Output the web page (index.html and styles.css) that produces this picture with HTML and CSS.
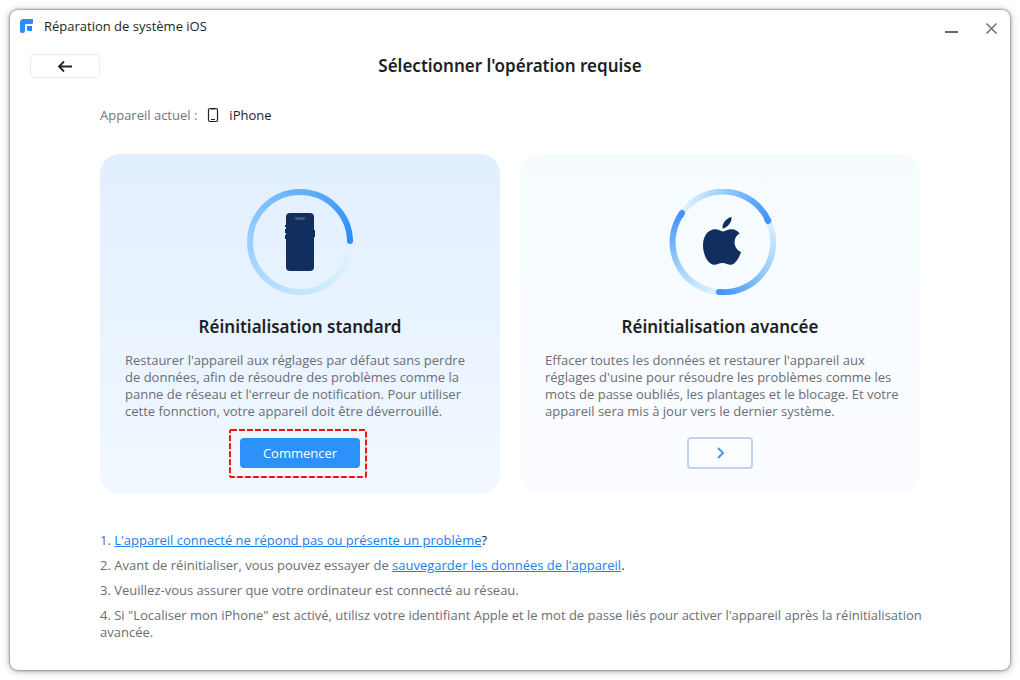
FILE: index.html
```
<!DOCTYPE html>
<html lang="fr">
<head>
    <meta charset="UTF-8">
    <meta name="viewport" content="width=device-width, initial-scale=1.0">
    <title>Réparation de système iOS</title>
    <link rel="stylesheet" href="styles.css">
</head>
<body>
    <div class="window">
        <header class="titlebar">
            <svg class="logo" width="14" height="14" viewBox="0 0 14 14">
                <path d="M3.5 0H13v3.5c0 1-.5 1.500-1.500 1.500H6.500C5.500 5 5 5.500 5 6.500V12c0 1.300-.8 2-2 2H2C.7 14 0 13.200 0 12V3.500C0 1.300 1.300 0 3.500 0z" fill="#2d8cf8"/>
                <path d="M7 7h5v3.500c0 1-.5 1.500-1.500 1.500H8.500C7.500 12 7 11.500 7 10.500z" fill="#2384fa"/>
            </svg>
            <span class="app-name">Réparation de système iOS</span>
            <button class="win-btn" aria-label="Réduire">
                <svg width="14" height="14" viewBox="0 0 14 14"><path d="M0 11h13" stroke="#626872" stroke-width="2"/></svg>
            </button>
            <button class="win-btn" aria-label="Fermer">
                <svg width="14" height="14" viewBox="0 0 14 14"><path d="M1.500 2.500l10 10M11.500 2.500l-10 10" stroke="#6e6e82" stroke-width="1.500"/></svg>
            </button>
        </header>

        <div class="top-row">
            <button class="back" aria-label="Retour">
                <svg width="16" height="14" viewBox="0 0 16 14"><path d="M15 7.500H2M7 2.500l-5 5 5 5" fill="none" stroke="#20242c" stroke-width="1.800"/></svg>
            </button>
            <h1>Sélectionner l'opération requise</h1>
        </div>

        <main class="content">
            <div class="device">
                <span class="device-label">Appareil actuel :</span>
                <svg width="12" height="16" viewBox="0 0 12 16">
                    <rect x="1.500" y="1.500" width="9" height="13" rx="1.500" fill="none" stroke="#222" stroke-width="1.200"/>
                    <path d="M3.500 2h5M4 12.500h4" stroke="#222" stroke-width="1.200"/>
                </svg>
                <span>iPhone</span>
            </div>

            <div class="cards">
                <section class="card standard">
                    <svg width="106" height="106" viewBox="0 0 106 106">
                        <defs>
                            <linearGradient id="s1" x1="53" y1="3" x2="103" y2="53" gradientUnits="userSpaceOnUse"><stop offset="0" stop-color="#64b2f8"/><stop offset="1" stop-color="#2c8cfc"/></linearGradient>
                            <linearGradient id="s2" x1="53" y1="3" x2="3" y2="53" gradientUnits="userSpaceOnUse"><stop offset="0" stop-color="#64b2f8"/><stop offset="1" stop-color="#9bcfff"/></linearGradient>
                            <linearGradient id="s3" x1="3" y1="53" x2="53" y2="103" gradientUnits="userSpaceOnUse"><stop offset="0" stop-color="#9bcfff"/><stop offset="1" stop-color="#c4e5fd"/></linearGradient>
                            <linearGradient id="s4" x1="53" y1="103" x2="103" y2="53" gradientUnits="userSpaceOnUse"><stop offset="0" stop-color="#c4e5fd"/><stop offset=".6" stop-color="#d8effe"/><stop offset="1" stop-color="#e6f2ff"/></linearGradient>
                        </defs>
                        <g fill="none" stroke-width="6">
                            <path d="M53 103A50 50 0 0 0 103 53" stroke="url(#s4)"/>
                            <path d="M3 53A50 50 0 0 0 53 103" stroke="url(#s3)"/>
                            <path d="M53 3A50 50 0 0 0 3 53" stroke="url(#s2)"/>
                            <path d="M53 3A50 50 0 0 1 103 52" stroke="url(#s1)"/>
                            <path d="M103 52v0.010" stroke="#2c8cfc" stroke-linecap="round"/>
                        </g>
                        <g fill="#102e5e">
                            <rect x="39" y="24" width="28" height="58" rx="4"/>
                            <rect x="38" y="36" width="2" height="2"/>
                            <rect x="38" y="40" width="2" height="4"/>
                            <rect x="38" y="46" width="2" height="4"/>
                            <rect x="66" y="41" width="2" height="7"/>
                        </g>
                        <rect x="48" y="28" width="10" height="3" rx="1" fill="#40587f"/>
                    </svg>
                    <h2>Réinitialisation standard</h2>
                    <p>
                        Restaurer l'appareil aux réglages par défaut sans perdre<br>
                        de données, afin de résoudre des problèmes comme la<br>
                        panne de réseau et l'erreur de notification. Pour utiliser<br>
                        cette fonnction, votre appareil doit être déverrouillé.
                    </p>
                    <div class="highlight">
                        <button class="start">Commencer</button>
                        <svg class="dashes" width="138" height="49" viewBox="0 0 138 49">
                            <rect x="1" y="1" width="136" height="47" rx="1" fill="none" stroke="#fb0d12" stroke-width="2" stroke-dasharray="6 2"/>
                        </svg>
                    </div>
                </section>

                <section class="card advanced">
                    <svg width="112" height="106" viewBox="-6 0 112 106">
                        <defs>
                            <linearGradient id="a1" x1="12" y1="24" x2="42" y2="102" gradientUnits="userSpaceOnUse"><stop offset="0" stop-color="#4394fb"/><stop offset=".5" stop-color="#90c9fd"/><stop offset="1" stop-color="#d8f0ff"/></linearGradient>
                            <linearGradient id="a2" x1="48" y1="103" x2="102" y2="38" gradientUnits="userSpaceOnUse"><stop offset="0" stop-color="#4394fb"/><stop offset=".5" stop-color="#90c9fd"/><stop offset="1" stop-color="#d4edff"/></linearGradient>
                            <linearGradient id="a3" x1="98" y1="32" x2="14" y2="22" gradientUnits="userSpaceOnUse"><stop offset="0" stop-color="#4394fb"/><stop offset=".5" stop-color="#90c9fd"/><stop offset="1" stop-color="#dbf2ff"/></linearGradient>
                        </defs>
                        <g fill="none" stroke-width="6">
                            <path d="M99 33A50 50 0 0 0 12 24" stroke="url(#a3)"/>
                            <path d="M48 103A50 50 0 0 0 99 33" stroke="url(#a2)"/>
                            <path d="M12 24A50 50 0 0 0 48 103" stroke="url(#a1)"/>
                        </g>
                        <path d="M12 24l-1 2M97 30l1 2M49 103h2" fill="none" stroke="#4394fb" stroke-width="6" stroke-linecap="round"/>
                        <g transform="translate(33 28)" fill="#102e5e">
                            <path d="M28.500 0C29 5 25 10.500 19.500 11.500 19 6 23.500 1 28.500 0z"/>
                            <path d="M20 14.500c2.500 0 4.500-2.200 8.500-2.200 3.500 0 6.500 1.700 8 4.200-7.500 4.500-6 15.500 1.500 18.500-1.500 5-5.500 12.500-10 12.800-3.200.2-4.500-1.800-8.500-1.800s-5.500 2-8.500 1.800C5 47.500 0 37.500 0 28.500c0-10 5.500-16.200 12-16.200 3.500 0 5.500 2.200 8 2.200z"/>
                        </g>
                    </svg>
                    <h2>Réinitialisation avancée</h2>
                    <p>
                        Effacer toutes les données et restaurer l'appareil aux<br>
                        réglages d'usine pour résoudre les problèmes comme les<br>
                        mots de passe oubliés, les plantages et le blocage. Et votre<br>
                        appareil sera mis à jour vers le dernier système.
                    </p>
                    <button class="next" aria-label="Réinitialisation avancée">
                        <svg width="10" height="14" viewBox="0 0 10 14"><path d="M3 2l5 5-5 5" fill="none" stroke="#4f97dd" stroke-width="2"/></svg>
                    </button>
                </section>
            </div>

            <div class="notes">
                <p>1. <a href="#">L'appareil connecté ne répond pas ou présente un problème</a><span class="dark">?</span></p>
                <p>2. Avant de réinitialiser, vous pouvez essayer de <a href="#">sauvegarder les données de l'appareil</a><span class="dark">.</span></p>
                <p>3. Veuillez-vous assurer que votre ordinateur est connecté au réseau.</p>
                <p>4. Si "Localiser mon iPhone" est activé, utilisz votre identifiant Apple et le mot de passe liés pour activer l'appareil après la réinitialisation avancée.</p>
            </div>
        </main>
    </div>
</body>
</html>
```
FILE: styles.css
```
* {
    box-sizing: border-box;
}

body {
    margin: 0;
    padding: 10px;
    background: #fff;
    font-family: "Open Sans", "Noto Sans", sans-serif;
    font-size: 13px;
    line-height: 17px;
    color: #1c1f24;
}

h1, h2, p {
    margin: 0;
}

h1, h2 {
    font-family: "Noto Sans", sans-serif;
    font-size: 17px;
    font-weight: 600;
    line-height: 24px;
}

button {
    font: inherit;
    padding: 0;
    cursor: pointer;
    display: flex;
    align-items: center;
    justify-content: center;
}

svg {
    display: block;
    flex-shrink: 0;
}

.window {
    min-height: calc(100vh - 20px);
    background: #fff;
    border-radius: 8px;
    box-shadow: 0 0 3px rgba(0, 0, 0, 0.6), 0 1px 9px rgba(0, 0, 0, 0.3);
}

/* Barre de titre */
.titlebar {
    display: flex;
    align-items: center;
    height: 32px;
    padding: 0 8px 0 10px;
}

.app-name {
    flex: 1;
    margin-left: 10px;
}

.win-btn {
    width: 20px;
    height: 20px;
    margin-left: 20px;
    margin-top: 4px;
    border: none;
    background: none;
}

.top-row {
    display: grid;
    grid-template-columns: 70px 1fr 70px;
    align-items: center;
    margin-top: 12px;
    padding: 0 20px;
}

.back {
    height: 24px;
    border: 1px solid #ececee;
    border-radius: 4px;
    background: #fff;
}

h1 {
    text-align: center;
}

.content {
    padding: 28px 70px 28px 90px;
}

.device {
    display: flex;
    align-items: center;
    height: 18px;
}

.device svg {
    margin: 0 10px;
}

.device-label {
    color: #71757d;
}

/* Cartes */
.cards {
    display: grid;
    grid-template-columns: 1fr 1fr;
    gap: 20px;
    margin: 30px 20px 0 0;
}

.card {
    display: flex;
    flex-direction: column;
    align-items: center;
    min-height: 340px;
    padding: 35px 10px 25px;
    border-radius: 20px;
}

.standard {
    background: linear-gradient(#e2efff, #f1f8ff);
}

.advanced {
    background: linear-gradient(#f5fbff, #fbfcff);
}

h2 {
    margin-top: 20px;
}

.card p {
    width: 100%;
    margin: 13px 0 17px;
    padding-left: 15px;
    color: #696e76;
}

.highlight {
    position: relative;
}

.dashes {
    position: absolute;
    top: -8px;
    left: -11px;
    pointer-events: none;
}

.start {
    width: 120px;
    height: 30px;
    margin-top: 1px;
    border: none;
    border-radius: 4px;
    background: #2c92fa;
    color: #fff;
}

.next {
    width: 66px;
    height: 32px;
    border: 2px solid #c3d3f3;
    border-radius: 4px;
    background: #fcfdff;
}

/* Remarques */
.notes {
    display: grid;
    gap: 8px;
    margin-top: 38px;
    color: #696e76;
}

.notes a {
    color: #2080f0;
}

.dark {
    color: #1c1f24;
}
```
